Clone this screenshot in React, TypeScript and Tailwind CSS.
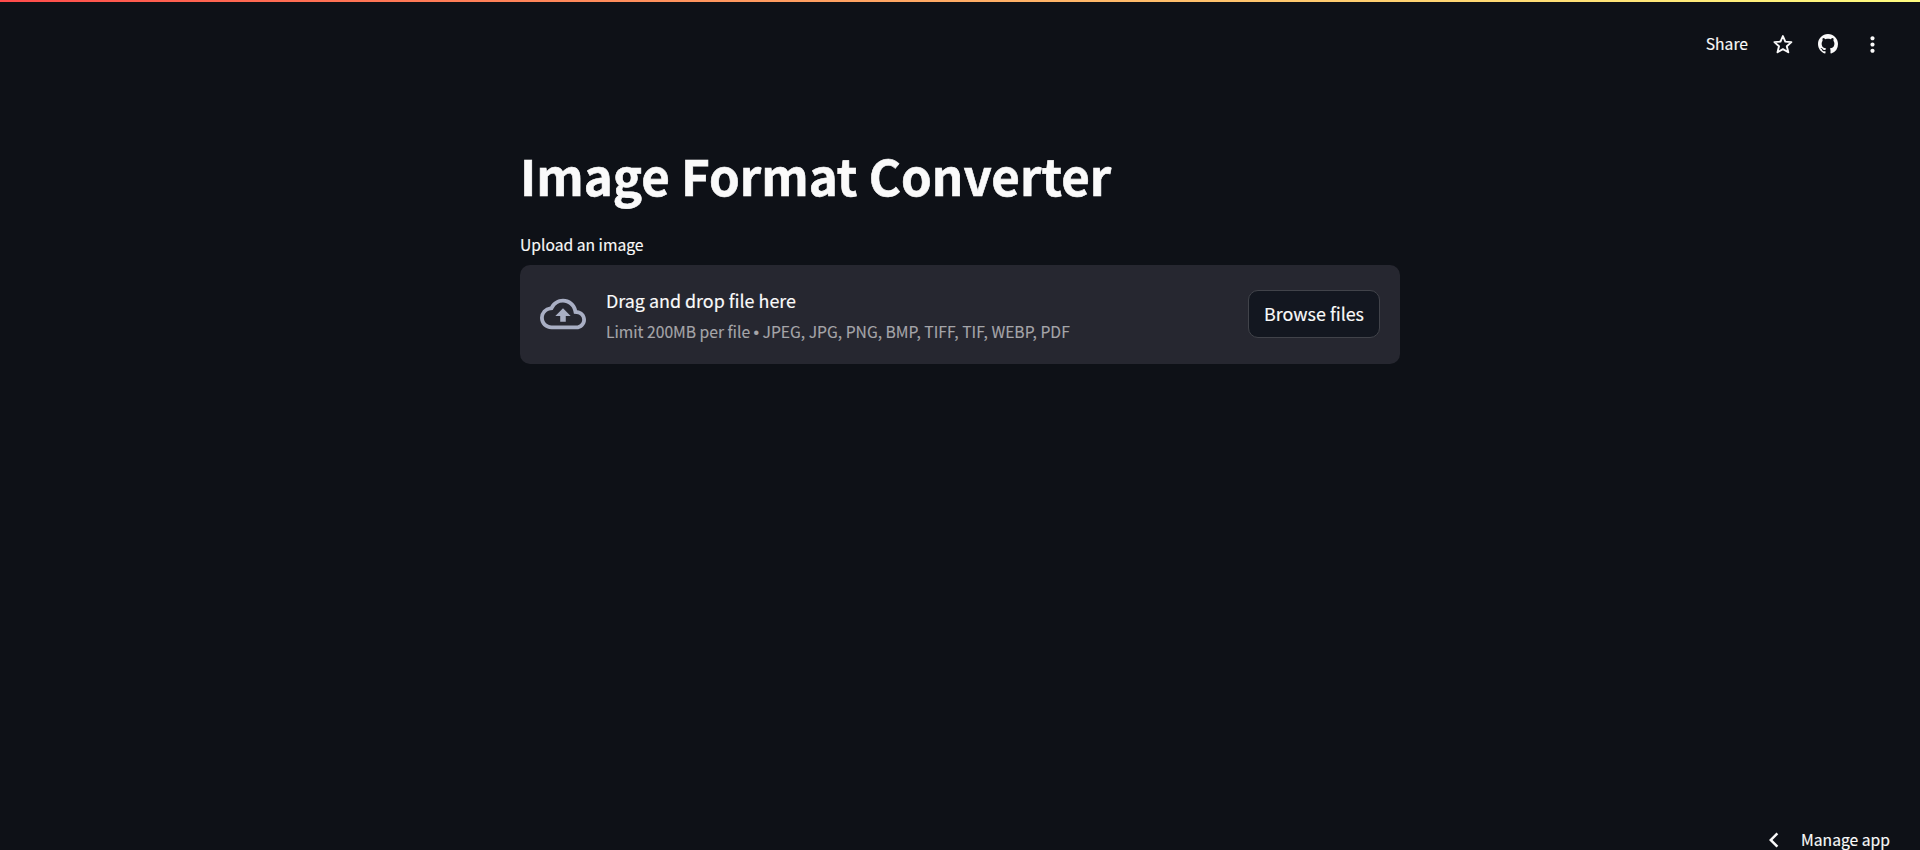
import { MdChevronLeft, MdMoreVert, MdOutlineCloudUpload } from "react-icons/md";

function StarIcon() {
  return (
    <svg className="block size-[20px]" viewBox="0 0 20 20" fill="none" stroke="currentColor" strokeWidth="1.9" strokeLinejoin="round">
      <path d="M9.9 2L12.3 7.6L18.4 8.1L13.8 12.2L15.3 18.3L9.9 15.1L4.5 18.3L6 12.2L1.4 8.1L7.5 7.6Z" />
    </svg>
  );
}

function GithubIcon() {
  return (
    <svg className="block size-[20px]" viewBox="0 0 16 16" fill="currentColor">
      <path d="M8 0C3.58 0 0 3.58 0 8c0 3.54 2.29 6.53 5.47 7.59.4.07.55-.17.55-.38 0-.19-.01-.82-.01-1.49-2.01.37-2.53-.49-2.69-.94-.09-.23-.48-.94-.82-1.13-.28-.15-.68-.52-.01-.53.63-.01 1.08.58 1.23.82.72 1.21 1.87.87 2.33.66.07-.52.28-.87.51-1.07-1.78-.2-3.64-.89-3.64-3.95 0-.87.31-1.59.82-2.15-.08-.2-.36-1.02.08-2.12 0 0 .67-.21 2.2.82.64-.18 1.32-.27 2-.27s1.36.09 2 .27c1.53-1.04 2.2-.82 2.2-.82.44 1.1.16 1.92.08 2.12.51.56.82 1.27.82 2.15 0 3.07-1.87 3.75-3.65 3.95.29.25.54.73.54 1.48 0 1.07-.01 1.93-.01 2.2 0 .21.15.46.55.38A8.01 8.01 0 0 0 16 8c0-4.42-3.58-8-8-8z" />
    </svg>
  );
}

export default function App() {
  return (
    <div className="flex h-[850px] w-full flex-col overflow-hidden bg-[#0e1117] font-['Noto_Sans_CJK_SC','Noto_Sans',sans-serif] text-[#fafafa] [-webkit-text-stroke:0.15px_currentColor]">
      <div className="h-[2px] shrink-0 bg-linear-to-r from-[#ff4b4b] to-[#fffd80]" />
      <header className="flex h-[84px] shrink-0 items-center justify-end pr-[35px]">
        <button className="text-[15.67px] leading-[24px]">Share</button>
        <button className="ml-[25px]" aria-label="Favorite"><StarIcon /></button>
        <button className="ml-[25px]" aria-label="View source"><GithubIcon /></button>
        <button className="ml-[22px]" aria-label="Menu"><MdMoreVert size={25} /></button>
      </header>
      <main className="mx-auto flex w-[880px] flex-1 flex-col">
        <h1 className="mt-[56px] text-[49.24px] leading-[66px] font-bold whitespace-nowrap [-webkit-text-stroke:0.6px_#fafafa]">Image Format Converter</h1>
        <label className="mt-[25px] text-[15.67px] leading-[24px]">Upload an image</label>
        <section className="mt-[8px] flex h-[99px] items-center rounded-[10px] bg-[#262730] px-[20px] pb-[2px]">
          <MdOutlineCloudUpload size={46} className="shrink-0 text-[#a9afc4]" />
          <div className="ml-[20px] flex flex-1 flex-col gap-[2px] pt-[2px]">
            <span className="text-[17.9px] leading-[32px]">Drag and drop file here</span>
            <small className="text-[15.67px] leading-[28px] text-[#a5a5a9]">
              Limit 200MB per file <span className="font-['Liberation_Sans',sans-serif] leading-none">•</span> JPEG, JPG, PNG, BMP, TIFF, TIF, WEBP, PDF
            </small>
          </div>
          <button className="flex h-[48px] w-[132px] items-center justify-center rounded-[10px] border border-[#41434a] bg-[#131720] pb-[2px] text-[17.9px] leading-[32px]">
            Browse files
          </button>
        </section>
      </main>
      <footer className="flex h-[20px] shrink-0 items-center justify-end pr-[30px]">
        <MdChevronLeft size={30} />
        <button className="ml-[12px] text-[15.67px] leading-[24px]">Manage app</button>
      </footer>
    </div>
  );
}
